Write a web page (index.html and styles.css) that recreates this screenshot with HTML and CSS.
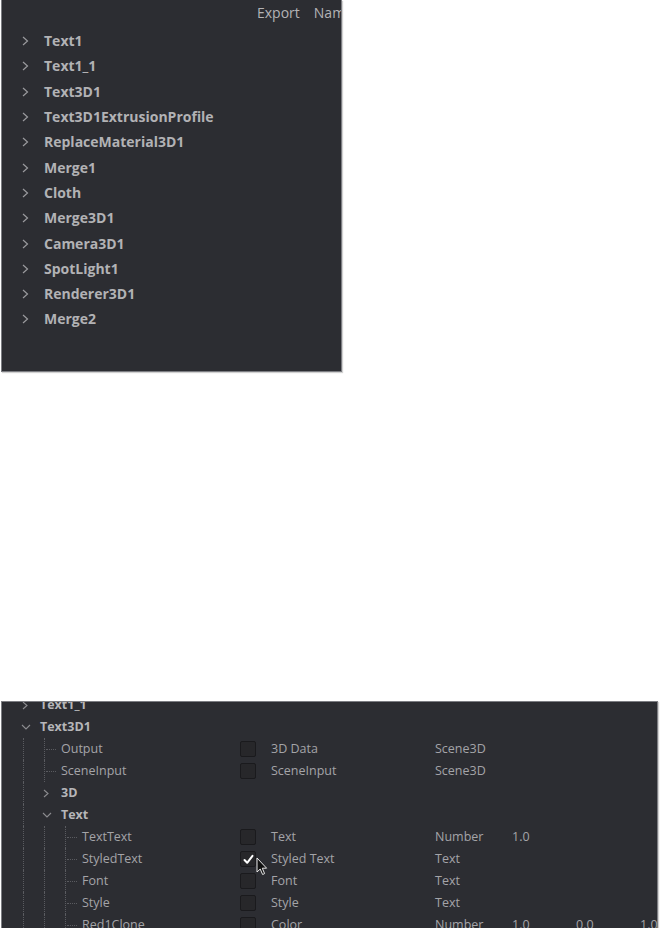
FILE: index.html
```html
<!DOCTYPE html>
<html>
<head>
<meta charset="utf-8">
<link rel="stylesheet" href="styles.css">
</head>
<body>
<div class="page">
  <section class="panel top-panel">
    <div class="head"><span class="h-export">Export</span><span class="h-name">Name</span></div>
    <ul class="node-list">
      <li class="node"><span class="chev"><svg width="7" height="10" viewBox="0 0 7 10"><path d="M1 1 L5.5 5 L1 9" fill="none" stroke="#9a9a9e" stroke-width="1.2"/></svg></span>Text1</li>
      <li class="node"><span class="chev"><svg width="7" height="10" viewBox="0 0 7 10"><path d="M1 1 L5.5 5 L1 9" fill="none" stroke="#9a9a9e" stroke-width="1.2"/></svg></span>Text1_1</li>
      <li class="node"><span class="chev"><svg width="7" height="10" viewBox="0 0 7 10"><path d="M1 1 L5.5 5 L1 9" fill="none" stroke="#9a9a9e" stroke-width="1.2"/></svg></span>Text3D1</li>
      <li class="node"><span class="chev"><svg width="7" height="10" viewBox="0 0 7 10"><path d="M1 1 L5.5 5 L1 9" fill="none" stroke="#9a9a9e" stroke-width="1.2"/></svg></span>Text3D1ExtrusionProfile</li>
      <li class="node"><span class="chev"><svg width="7" height="10" viewBox="0 0 7 10"><path d="M1 1 L5.5 5 L1 9" fill="none" stroke="#9a9a9e" stroke-width="1.2"/></svg></span>ReplaceMaterial3D1</li>
      <li class="node"><span class="chev"><svg width="7" height="10" viewBox="0 0 7 10"><path d="M1 1 L5.5 5 L1 9" fill="none" stroke="#9a9a9e" stroke-width="1.2"/></svg></span>Merge1</li>
      <li class="node"><span class="chev"><svg width="7" height="10" viewBox="0 0 7 10"><path d="M1 1 L5.5 5 L1 9" fill="none" stroke="#9a9a9e" stroke-width="1.2"/></svg></span>Cloth</li>
      <li class="node"><span class="chev"><svg width="7" height="10" viewBox="0 0 7 10"><path d="M1 1 L5.5 5 L1 9" fill="none" stroke="#9a9a9e" stroke-width="1.2"/></svg></span>Merge3D1</li>
      <li class="node"><span class="chev"><svg width="7" height="10" viewBox="0 0 7 10"><path d="M1 1 L5.5 5 L1 9" fill="none" stroke="#9a9a9e" stroke-width="1.2"/></svg></span>Camera3D1</li>
      <li class="node"><span class="chev"><svg width="7" height="10" viewBox="0 0 7 10"><path d="M1 1 L5.5 5 L1 9" fill="none" stroke="#9a9a9e" stroke-width="1.2"/></svg></span>SpotLight1</li>
      <li class="node"><span class="chev"><svg width="7" height="10" viewBox="0 0 7 10"><path d="M1 1 L5.5 5 L1 9" fill="none" stroke="#9a9a9e" stroke-width="1.2"/></svg></span>Renderer3D1</li>
      <li class="node"><span class="chev"><svg width="7" height="10" viewBox="0 0 7 10"><path d="M1 1 L5.5 5 L1 9" fill="none" stroke="#9a9a9e" stroke-width="1.2"/></svg></span>Merge2</li>
    </ul>
  </section>

  <section class="panel bottom-panel">
    <div class="grid">
      <div class="tree bold"><span class="chev-r"><svg width="8" height="9" viewBox="0 0 8 9"><path d="M2 1 L6 4.5 L2 8" fill="none" stroke="#8c8c90" stroke-width="1.1"/></svg></span>Text1_1</div>
      <div></div><div></div><div></div><div></div><div></div><div></div>

      <div class="tree bold"><span class="chev-r"><svg width="10" height="8" viewBox="0 0 10 8"><path d="M1 2 L5 6 L9 2" fill="none" stroke="#8c8c90" stroke-width="1.1"/></svg></span>Text3D1</div>
      <div></div><div></div><div></div><div></div><div></div><div></div>

      <div class="tree"><span class="guide"></span><span class="conn"></span>Output</div>
      <div class="cb-cell"><span class="cb"></span></div><div class="lbl">3D Data</div><div class="lbl">Scene3D</div><div></div><div></div><div></div>

      <div class="tree"><span class="guide"></span><span class="conn"></span>SceneInput</div>
      <div class="cb-cell"><span class="cb"></span></div><div class="lbl">SceneInput</div><div class="lbl">Scene3D</div><div></div><div></div><div></div>

      <div class="tree bold"><span class="guide"></span><span class="chev-r"><svg width="8" height="9" viewBox="0 0 8 9"><path d="M2 1 L6 4.5 L2 8" fill="none" stroke="#8c8c90" stroke-width="1.1"/></svg></span>3D</div>
      <div></div><div></div><div></div><div></div><div></div><div></div>

      <div class="tree bold"><span class="guide"></span><span class="chev-r"><svg width="10" height="8" viewBox="0 0 10 8"><path d="M1 2 L5 6 L9 2" fill="none" stroke="#8c8c90" stroke-width="1.1"/></svg></span>Text</div>
      <div></div><div></div><div></div><div></div><div></div><div></div>

      <div class="tree"><span class="guide"></span><span class="guide"></span><span class="conn"></span>TextText</div>
      <div class="cb-cell"><span class="cb"></span></div><div class="lbl">Text</div><div class="lbl">Number</div><div class="lbl">1.0</div><div></div><div></div>

      <div class="tree"><span class="guide"></span><span class="guide"></span><span class="conn"></span>StyledText</div>
      <div class="cb-cell"><span class="cb checked"><svg width="13" height="13" viewBox="0 0 13 13"><path d="M2.5 7 L5.2 9.8 L10.5 2.8" fill="none" stroke="#ffffff" stroke-width="2" stroke-linecap="round" stroke-linejoin="round"/></svg></span><svg class="cursor" width="12" height="19" viewBox="0 0 12 19"><path d="M1 1 L1 15 L4.2 12 L6.6 17.5 L8.6 16.6 L6.3 11.2 L10.6 11.2 Z" fill="#111" stroke="#e8e8e8" stroke-width="1"/></svg></div><div class="lbl">Styled Text</div><div class="lbl">Text</div><div></div><div></div><div></div>

      <div class="tree"><span class="guide"></span><span class="guide"></span><span class="conn"></span>Font</div>
      <div class="cb-cell"><span class="cb"></span></div><div class="lbl">Font</div><div class="lbl">Text</div><div></div><div></div><div></div>

      <div class="tree"><span class="guide"></span><span class="guide"></span><span class="conn"></span>Style</div>
      <div class="cb-cell"><span class="cb"></span></div><div class="lbl">Style</div><div class="lbl">Text</div><div></div><div></div><div></div>

      <div class="tree"><span class="guide"></span><span class="guide"></span><span class="conn"></span>Red1Clone</div>
      <div class="cb-cell"><span class="cb"></span></div><div class="lbl">Color</div><div class="lbl">Number</div><div class="lbl">1.0</div><div class="lbl">0.0</div><div class="lbl">1.0</div>
    </div>
  </section>
</div>
</body>
</html>
```

FILE: styles.css
```css
* { box-sizing: border-box; }
html, body { margin: 0; padding: 0; background: #ffffff; }
body {
  font-family: "Open Sans", "Noto Sans", sans-serif;
  width: 660px;
  height: 928px;
  overflow: hidden;
}
.page {
  display: flex;
  flex-direction: column;
  padding-left: 1px;
}
.panel {
  background: #2c2d32;
  border: 1px solid #7c7d82;
  box-shadow: 1px 1px 1px rgba(0,0,0,0.18);
  overflow: hidden;
}
.top-panel {
  width: 341px;
  height: 372px;
  border-top: none;
}
.head {
  height: 24px;
  display: flex;
  align-items: center;
  padding-left: 255px;
  font-size: 14px;
  color: #b3b3b6;
  white-space: nowrap;
}
.h-export { margin-right: 14px; }
.node-list {
  list-style: none;
  margin: 0;
  padding: 4px 0 0 0;
}
.node {
  height: 25.3px;
  display: flex;
  align-items: center;
  font-weight: 700;
  font-size: 14px;
  color: #b2b2b5;
  padding-left: 19px;
}
.chev {
  width: 23px;
  display: flex;
  align-items: center;
  padding-top: 1px;
  padding-left: 1px;
}
.bottom-panel {
  margin-top: 329px;
  width: 657px;
  height: 240px;
}
.grid {
  margin-top: -8px;
  display: grid;
  grid-template-columns: 238px 31px 164px 77px 64px 64px 60px;
  grid-auto-rows: 22px;
  font-size: 12.5px;
  color: #a4a4a8;
  white-space: nowrap;
}
.grid > div { display: flex; align-items: center; min-width: 0; }
.tree {
  padding-left: 16px;
  align-items: stretch !important;
  line-height: 22px;
}
.tree.bold { font-weight: 700; color: #b6b6b9; }
.chev-r {
  width: 22px;
  display: flex;
  align-items: center;
  padding-left: 3px;
}
.guide {
  width: 21px;
  flex: none;
  position: relative;
}
.guide::before {
  content: "";
  position: absolute;
  left: 5px;
  top: 0;
  bottom: 0;
  border-left: 1px dotted #5a5b60;
}
.conn {
  width: 22px;
  flex: none;
  position: relative;
}
.conn::before {
  content: "";
  position: absolute;
  left: 5px;
  top: 0;
  bottom: 0;
  border-left: 1px dotted #5a5b60;
}
.conn::after {
  content: "";
  position: absolute;
  left: 7px;
  width: 10px;
  top: 11px;
  border-top: 1px dotted #5a5b60;
}
.cb-cell { position: relative; }
.cb {
  width: 16px;
  height: 16px;
  border-radius: 2px;
  background: #27272a;
  border: 1px solid #1a1a1d;
  display: flex;
  align-items: center;
  justify-content: center;
}
.cursor {
  position: absolute;
  left: 16px;
  top: 9px;
}
.lbl { line-height: 22px; }
```
